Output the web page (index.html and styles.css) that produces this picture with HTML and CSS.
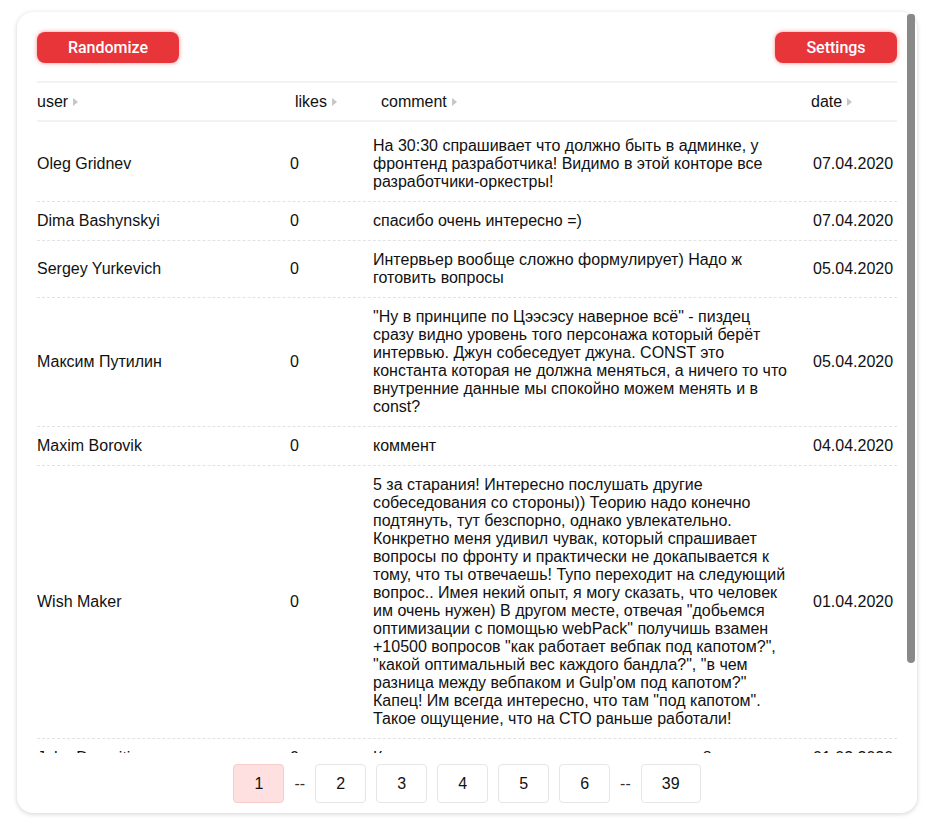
FILE: index.html
```html
<!DOCTYPE html>
<html lang="ru">
<head>
<meta charset="utf-8">
<title>Comments</title>
<link rel="stylesheet" href="styles.css">
</head>
<body>
<div class="card">
  <div class="scroll-thumb"></div>
  <div class="toolbar">
    <button class="btn">Randomize</button>
    <button class="btn btn-settings">Settings</button>
  </div>
  <div class="table">
    <div class="thead">
      <div class="th th-user">user<span class="sort"></span></div>
      <div class="th th-likes">likes<span class="sort"></span></div>
      <div class="th th-comment">comment<span class="sort"></span></div>
      <div class="th th-date">date<span class="sort"></span></div>
    </div>
    <div class="tbody">
      <div class="row">
        <div class="cell">Oleg Gridnev</div>
        <div class="cell">0</div>
        <div class="cell comment">На 30:30 спрашивает что должно быть в админке, у фронтенд разработчика! Видимо в этой конторе все разработчики-оркестры!</div>
        <div class="cell date">07.04.2020</div>
      </div>
      <div class="row">
        <div class="cell">Dima Bashynskyi</div>
        <div class="cell">0</div>
        <div class="cell comment">спасибо очень интересно =)</div>
        <div class="cell date">07.04.2020</div>
      </div>
      <div class="row">
        <div class="cell">Sergey Yurkevich</div>
        <div class="cell">0</div>
        <div class="cell comment">Интервьер вообще сложно формулирует) Надо ж готовить вопросы</div>
        <div class="cell date">05.04.2020</div>
      </div>
      <div class="row">
        <div class="cell">Максим Путилин</div>
        <div class="cell">0</div>
        <div class="cell comment">"Ну в принципе по Цээсэсу наверное всё" - пиздец сразу видно уровень того персонажа который берёт интервью. Джун собеседует джуна. CONST это константа которая не должна меняться, а ничего то что внутренние данные мы спокойно можем менять и в const?</div>
        <div class="cell date">05.04.2020</div>
      </div>
      <div class="row">
        <div class="cell">Maxim Borovik</div>
        <div class="cell">0</div>
        <div class="cell comment">коммент</div>
        <div class="cell date">04.04.2020</div>
      </div>
      <div class="row">
        <div class="cell">Wish Maker</div>
        <div class="cell">0</div>
        <div class="cell comment">5 за старания! Интересно послушать другие собеседования со стороны)) Теорию надо конечно подтянуть, тут безспорно, однако увлекательно. Конкретно меня удивил чувак, который спрашивает вопросы по фронту и практически не докапывается к тому, что ты отвечаешь! Тупо переходит на следующий вопрос.. Имея некий опыт, я могу сказать, что человек им очень нужен) В другом месте, отвечая "добьемся оптимизации с помощью webPack" получишь взамен +10500 вопросов "как работает вебпак под капотом?", "какой оптимальный вес каждого бандла?", "в чем разница между вебпаком и Gulp'ом под капотом?" Капец! Им всегда интересно, что там "под капотом". Такое ощущение, что на СТО раньше работали!</div>
        <div class="cell date">01.04.2020</div>
      </div>
      <div class="row">
        <div class="cell">John Dorositin</div>
        <div class="cell">0</div>
        <div class="cell comment">Круто, интересно, жду еще серии, нравится 8</div>
        <div class="cell date">01.03.2020</div>
      </div>
    </div>
  </div>
  <div class="pager">
    <button class="page active">1</button>
    <span class="dots">--</span>
    <button class="page">2</button>
    <button class="page">3</button>
    <button class="page">4</button>
    <button class="page">5</button>
    <button class="page">6</button>
    <span class="dots">--</span>
    <button class="page">39</button>
  </div>
</div>
</body>
</html>
```
FILE: styles.css
```css
* { box-sizing: border-box; }
html, body { margin: 0; background: #fff; }
body {
  padding: 12px 17px;
  font-family: "Liberation Sans", Arial, sans-serif;
  font-size: 16px;
  color: #111;
}
.card {
  position: relative;
  width: 900px;
  height: 801px;
  border-radius: 16px;
  box-shadow: 0 1px 5px rgba(0, 0, 0, 0.18);
  padding: 20px 20px 0;
  background: #fff;
}
.scroll-thumb {
  position: absolute;
  top: 2px;
  right: 2px;
  width: 8px;
  height: 649px;
  border-radius: 3px 3px 4px 4px;
  background: #898989;
}
.toolbar {
  display: flex;
  justify-content: space-between;
  margin-bottom: 18px;
}
.btn {
  height: 31px;
  width: 142px;
  border: none;
  border-radius: 8px;
  background: #e8353a;
  color: #fff;
  font-family: Roboto, "Liberation Sans", sans-serif;
  font-weight: 500;
  font-size: 16px;
  box-shadow: 0 0 4px rgba(232, 53, 58, 0.55);
  padding: 0;
}
.btn-settings { width: 122px; }
.table {
  height: 672px;
  overflow: hidden;
}
.thead {
  display: grid;
  grid-template-columns: 253px 83px 420px 1fr;
  height: 41px;
  border-top: 2px solid #f2f2f2;
  border-bottom: 2px solid #f2f2f2;
  align-items: center;
}
.th { display: flex; align-items: center; }
.th-likes { padding-left: 5px; }
.th-comment { padding-left: 8px; }
.th-date { padding-left: 18px; }
.sort {
  width: 0;
  height: 0;
  margin-left: 5px;
  border-left: 5px solid #c6c6c6;
  border-top: 4.5px solid transparent;
  border-bottom: 4.5px solid transparent;
}
.tbody { padding-top: 5px; }
.row {
  display: grid;
  grid-template-columns: 253px 83px 420px 1fr;
  align-items: center;
  border-bottom: 1px dashed #e2e2e2;
  line-height: 18px;
}
.cell { padding: 10px 0; }
.date { padding-left: 20px; }
.pager {
  display: flex;
  justify-content: center;
  align-items: center;
  gap: 10px;
  margin-top: 11px;
}
.page {
  height: 39px;
  min-width: 51px;
  padding: 0 20px;
  border: 1px solid #e6e6e6;
  border-radius: 4px;
  background: #fff;
  font-family: "Liberation Sans", Arial, sans-serif;
  font-size: 16px;
  color: #111;
}
.page.active {
  background: #fde0df;
  border-color: #f6cccc;
}
.dots { color: #333; font-size: 16px; }
```
